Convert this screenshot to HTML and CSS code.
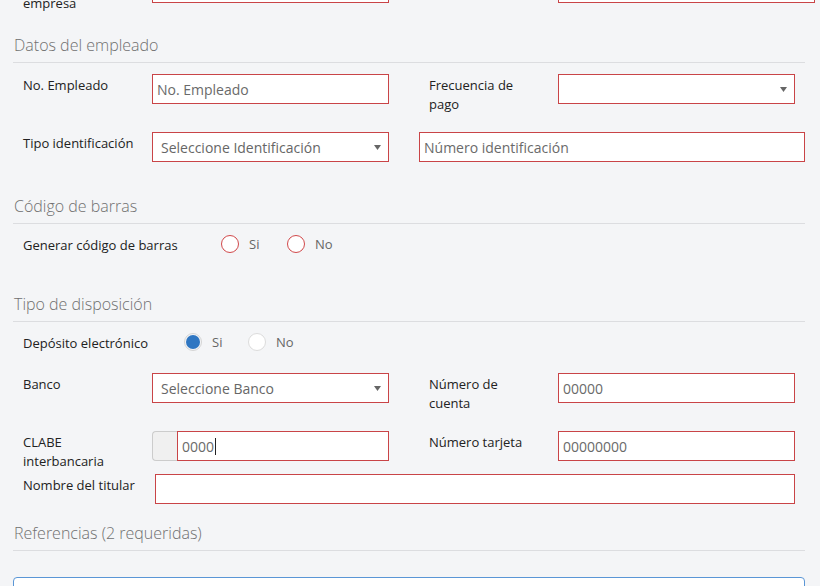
FILE: index.html
```html
<!DOCTYPE html>
<html lang="es">
<head>
<meta charset="utf-8">
<title>Formulario</title>
<link rel="stylesheet" href="styles.css">
</head>
<body>
<div class="page">
  <div class="form">
    <div class="row row-top">
      <label class="lbl">Nombre de la empresa</label>
      <div class="field err"></div>
      <span></span>
      <label class="lbl"></label>
      <div class="field err wide-top"></div>
    </div>

    <h3 class="section">Datos del empleado</h3>
    <div class="row r1">
      <label class="lbl">No. Empleado</label>
      <div class="field err"><span class="ph">No. Empleado</span></div>
      <span></span>
      <label class="lbl">Frecuencia de pago</label>
      <div class="field err select"><span class="ph"></span><svg class="arrow" width="7" height="5" viewBox="0 0 7 5"><path d="M0 0H7L3.5 5Z" fill="#666"/></svg></div>
    </div>
    <div class="row row-id r2">
      <label class="lbl">Tipo identificación</label>
      <div class="field err select"><span class="sel">Seleccione Identificación</span><svg class="arrow" width="7" height="5" viewBox="0 0 7 5"><path d="M0 0H7L3.5 5Z" fill="#666"/></svg></div>
      <span></span>
      <div class="field err"><span class="ph">Número identificación</span></div>
    </div>

    <h3 class="section s2">Código de barras</h3>
    <div class="radio-row rr1">
      <label class="lbl rlbl1">Generar código de barras</label>
      <span class="radio r-err"></span><span class="rtext">Si</span>
      <span class="radio r-err"></span><span class="rtext">No</span>
    </div>

    <h3 class="section s3">Tipo de disposición</h3>
    <div class="radio-row rr2">
      <label class="lbl rlbl2">Depósito electrónico</label>
      <span class="radio r-on"></span><span class="rtext">Si</span>
      <span class="radio"></span><span class="rtext">No</span>
    </div>
    <div class="row r3">
      <label class="lbl">Banco</label>
      <div class="field err select"><span class="sel">Seleccione Banco</span><svg class="arrow" width="7" height="5" viewBox="0 0 7 5"><path d="M0 0H7L3.5 5Z" fill="#666"/></svg></div>
      <span></span>
      <label class="lbl">Número de cuenta</label>
      <div class="field err"><span class="ph">00000</span></div>
    </div>
    <div class="row r4">
      <label class="lbl">CLABE interbancaria</label>
      <div class="group">
        <span class="addon"></span>
        <div class="field err grow"><span class="ph">0000</span><span class="caret"></span></div>
      </div>
      <span></span>
      <label class="lbl">Número tarjeta</label>
      <div class="field err"><span class="ph">00000000</span></div>
    </div>
    <div class="row row-name r5">
      <label class="lbl lbl-free">Nombre del titular</label>
      <div class="field err"></div>
    </div>

    <h3 class="section s4">Referencias (2 requeridas)</h3>
    <div class="panel"></div>
  </div>
</div>
</body>
</html>
```
FILE: styles.css
```css
* { box-sizing: border-box; }
html, body { margin: 0; padding: 0; background: #ffffff; }
body { font-family: "Open Sans", "DejaVu Sans", sans-serif; overflow: hidden; height: 586px; }
.page {
  width: 820px;
  height: 586px;
  background: #f4f5f7;
  overflow: hidden;
}
.form {
  padding-left: 13px;
  width: 805px;
}
.row {
  display: grid;
  grid-template-columns: 129px 237px 40px 129px 237px;
  padding-left: 10px;
  height: 30px;
  align-items: start;
}
.row-top { margin-top: -27px; }
.row-id { grid-template-columns: 129px 237px 30px 386px; }
.row-name { grid-template-columns: 132px 640px; }
.r1 { margin-top: 11px; }
.r2 { margin-top: 28px; }
.r3 { margin-top: 22px; }
.r4 { margin-top: 28px; }
.r5 { margin-top: 13px; }

.lbl {
  font-size: 13px;
  line-height: 18.5px;
  color: #222;
  padding-top: 2px;
  max-width: 111.5px;
}
.lbl-free { max-width: none; }
.field {
  height: 30px;
  background: #fff;
  border: 1px solid #c94447;
  display: flex;
  align-items: center;
  padding: 0 4px;
  font-size: 14px;
  color: #666;
  white-space: nowrap;
  overflow: hidden;
}
.wide-top { width: 257px; }
.select { padding: 0 7px 0 8px; }
.select .arrow { margin-left: auto; flex: none; }
.sel { color: #666; }
.ph { color: #6a6a6a; }
.group { display: flex; height: 30px; }
.addon {
  width: 25px;
  flex: none;
  border: 1px solid #ccc;
  border-right: none;
  border-radius: 4px 0 0 4px;
  background: #f0f0f0;
}
.grow { flex: 1; }
.caret {
  display: inline-block;
  width: 1px;
  height: 17px;
  background: #222;
  margin-left: 1px;
}

.section {
  margin: 0;
  font-size: 16px;
  font-weight: 300;
  line-height: 24px;
  color: #707070;
  padding: 0 0 5px 1px;
  border-bottom: 1px solid #dcdde0;
  margin-top: 30px;
}
.s2 { margin-top: 32px; }
.s3 { margin-top: 39px; }
.s4 { margin-top: 17px; }

.radio-row {
  display: flex;
  align-items: flex-start;
  padding-left: 10px;
  height: 18px;
  margin-top: 11px;
}
.radio-row .lbl { padding-top: 1px; max-width: none; }
.rlbl1 { width: 198px; flex: none; }
.rlbl2 { width: 161px; flex: none; }
.radio {
  width: 18px;
  height: 18px;
  border-radius: 50%;
  border: 1px solid #dcdcdc;
  background: #fff;
  flex: none;
}
.r-err { border-color: #d1494b; }
.r-on {
  border-color: #d4d4d4;
  padding: 1px;
  background: #2f76c2;
  background-clip: content-box;
}
.rtext {
  font-size: 13px;
  line-height: 18.5px;
  color: #666;
  margin-left: 10px;
  width: 38px;
  padding-top: 0;
  flex: none;
}
.rr2 .rtext { width: 36px; }

.panel {
  margin-top: 26px;
  width: 792px;
  height: 60px;
  border: 1px solid #5a96d6;
  border-radius: 4px;
  background: #fff;
}
```
